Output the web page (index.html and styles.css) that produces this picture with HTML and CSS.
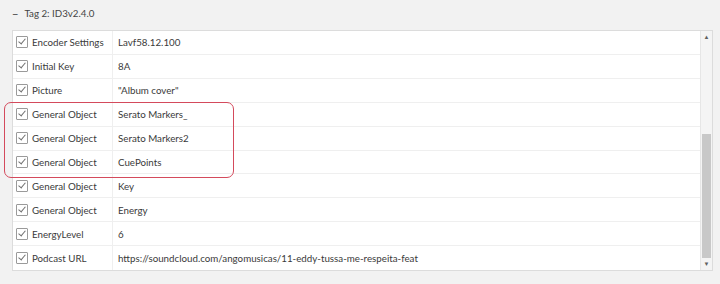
FILE: index.html
```html
<!DOCTYPE html>
<html lang="en">
<head>
  <meta charset="UTF-8">
  <title>Tag 2: ID3v2.4.0</title>
  <link rel="stylesheet" href="styles.css">
</head>
<body>
  <div class="window">
    <div class="group-header">
      <span class="toggle">−</span>
      <span>Tag 2: ID3v2.4.0</span>
    </div>

    <div class="panel">
      <div class="rows">
        <div class="row"><span class="check"></span><span class="name">Encoder Settings</span><span class="value">Lavf58.12.100</span></div>
        <div class="row"><span class="check"></span><span class="name">Initial Key</span><span class="value">8A</span></div>
        <div class="row"><span class="check"></span><span class="name">Picture</span><span class="value">"Album cover"</span></div>
        <div class="row"><span class="check"></span><span class="name">General Object</span><span class="value">Serato Markers_</span></div>
        <div class="row"><span class="check"></span><span class="name">General Object</span><span class="value">Serato Markers2</span></div>
        <div class="row"><span class="check"></span><span class="name">General Object</span><span class="value">CuePoints</span></div>
        <div class="row"><span class="check"></span><span class="name">General Object</span><span class="value">Key</span></div>
        <div class="row"><span class="check"></span><span class="name">General Object</span><span class="value">Energy</span></div>
        <div class="row"><span class="check"></span><span class="name">EnergyLevel</span><span class="value">6</span></div>
        <div class="row"><span class="check"></span><span class="name">Podcast URL</span><span class="value">https://soundcloud.com/angomusicas/11-eddy-tussa-me-respeita-feat</span></div>
      </div>

      <div class="scrollbar">
        <span class="arrow">▲</span>
        <div class="track"><div class="thumb"></div></div>
        <span class="arrow">▼</span>
      </div>

      <!-- resaltado de los tres General Object de Serato -->
      <div class="highlight"></div>
    </div>
  </div>
</body>
</html>
```

FILE: styles.css
```css
body {
  margin: 0;
  font-family: Lato, "Noto Sans", sans-serif;
  font-size: 9.75px;
  color: #3a3a3a;
  background-color: #f2f2f2;
}

.window {
  width: 720px;
  height: 284px;
  padding: 0 7px 0 12px;
  box-sizing: border-box;
}

.group-header {
  height: 26px;
  margin-bottom: 4px;
  display: flex;
  align-items: center;
  gap: 6px;
  color: #444;
}

.toggle {
  font-size: 11px;
}

.panel {
  position: relative;
  display: flex;
  height: 241px;
  background-color: #fff;
  border: 1px solid #dcdcdc;
  box-sizing: border-box;
}

.rows {
  flex: 1;
  display: flex;
  flex-direction: column;
}

.row {
  height: 24px;
  display: flex;
  align-items: center;
  border-bottom: 1px solid #efefef;
  box-sizing: border-box;
}

.row:last-child {
  border-bottom: none;
}

.check {
  width: 10px;
  height: 10px;
  margin: 0 4px 0 3px;
  border: 1px solid #9a9a9a;
  border-radius: 1px;
  position: relative;
  flex-shrink: 0;
}

.check::after {
  content: "";
  position: absolute;
  left: 3px;
  top: 0px;
  width: 3px;
  height: 6px;
  border-right: 1.2px solid #707070;
  border-bottom: 1.2px solid #707070;
  transform: rotate(40deg);
}

.name {
  width: 80px;
  height: 100%;
  display: flex;
  align-items: center;
  border-right: 1px solid #efefef;
  white-space: nowrap;
}

.value {
  padding-left: 5px;
  white-space: nowrap;
}

.scrollbar {
  width: 11px;
  display: flex;
  flex-direction: column;
  align-items: center;
  background-color: #f4f4f4;
  border-left: 1px solid #e6e6e6;
}

.arrow {
  font-size: 6px;
  color: #606060;
  height: 12px;
  line-height: 12px;
}

.track {
  flex: 1;
  width: 100%;
  display: flex;
  flex-direction: column;
  justify-content: flex-end;
}

.thumb {
  height: 124px;
  margin: 0 1px;
  background-color: #c8c8c8;
}

.highlight {
  position: absolute;
  left: -9px;
  top: 71px;
  width: 230px;
  height: 76px;
  border: 1.5px solid #d44a5c;
  border-radius: 7px;
  box-sizing: border-box;
  pointer-events: none;
}
```
